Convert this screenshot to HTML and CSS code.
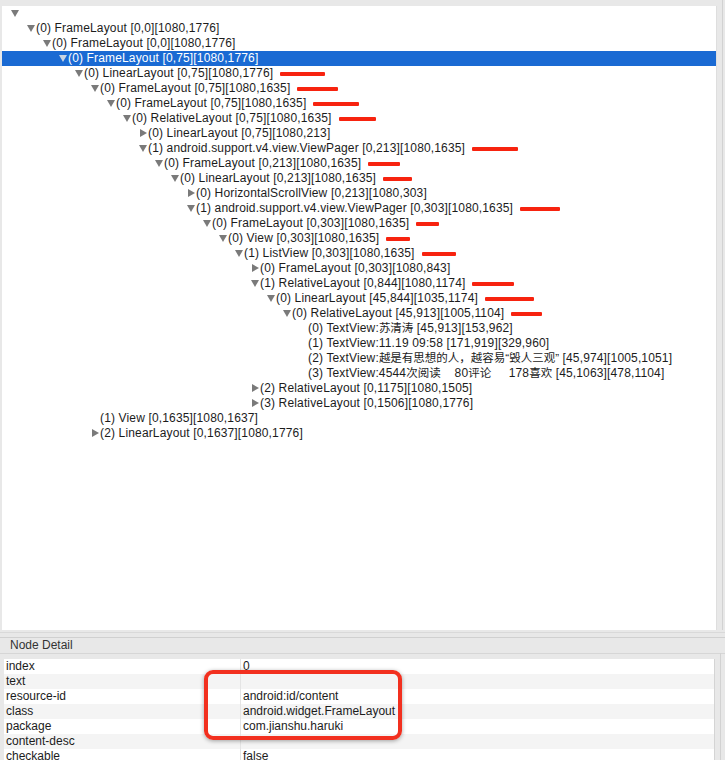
FILE: index.html
```html
<!DOCTYPE html>
<html lang="en">
<head>
    <meta charset="UTF-8">
    <title>UI Automator Viewer</title>
    <link rel="stylesheet" href="styles.css">
</head>
<body>
    <div class="tree-wrap">
        <div class="tree">
            <div class="row" style="--d:0"><span class="tg open"></span></div>
            <div class="row" style="--d:1"><span class="tg open"></span>(0) FrameLayout [0,0][1080,1776]</div>
            <div class="row" style="--d:2"><span class="tg open"></span>(0) FrameLayout [0,0][1080,1776]</div>
            <div class="row selected" style="--d:3"><span class="tg open"></span>(0) FrameLayout [0,75][1080,1776]</div>
            <div class="row" style="--d:4"><span class="tg open"></span>(0) LinearLayout [0,75][1080,1776]<span class="redact" style="width:45px"></span></div>
            <div class="row" style="--d:5"><span class="tg open"></span>(0) FrameLayout [0,75][1080,1635]<span class="redact" style="width:41px"></span></div>
            <div class="row" style="--d:6"><span class="tg open"></span>(0) FrameLayout [0,75][1080,1635]<span class="redact" style="width:46px"></span></div>
            <div class="row" style="--d:7"><span class="tg open"></span>(0) RelativeLayout [0,75][1080,1635]<span class="redact" style="width:37px"></span></div>
            <div class="row" style="--d:8"><span class="tg shut"></span>(0) LinearLayout [0,75][1080,213]</div>
            <div class="row" style="--d:8"><span class="tg open"></span>(1) android.support.v4.view.ViewPager [0,213][1080,1635]<span class="redact" style="width:46px"></span></div>
            <div class="row" style="--d:9"><span class="tg open"></span>(0) FrameLayout [0,213][1080,1635]<span class="redact" style="width:32px"></span></div>
            <div class="row" style="--d:10"><span class="tg open"></span>(0) LinearLayout [0,213][1080,1635]<span class="redact" style="width:29px"></span></div>
            <div class="row" style="--d:11"><span class="tg shut"></span>(0) HorizontalScrollView [0,213][1080,303]</div>
            <div class="row" style="--d:11"><span class="tg open"></span>(1) android.support.v4.view.ViewPager [0,303][1080,1635]<span class="redact" style="width:40px"></span></div>
            <div class="row" style="--d:12"><span class="tg open"></span>(0) FrameLayout [0,303][1080,1635]<span class="redact" style="width:23px"></span></div>
            <div class="row" style="--d:13"><span class="tg open"></span>(0) View [0,303][1080,1635]<span class="redact" style="width:24px"></span></div>
            <div class="row" style="--d:14"><span class="tg open"></span>(1) ListView [0,303][1080,1635]<span class="redact" style="width:34px"></span></div>
            <div class="row" style="--d:15"><span class="tg shut"></span>(0) FrameLayout [0,303][1080,843]</div>
            <div class="row" style="--d:15"><span class="tg open"></span>(1) RelativeLayout [0,844][1080,1174]<span class="redact" style="width:42px"></span></div>
            <div class="row" style="--d:16"><span class="tg open"></span>(0) LinearLayout [45,844][1035,1174]<span class="redact" style="width:49px"></span></div>
            <div class="row" style="--d:17"><span class="tg open"></span>(0) RelativeLayout [45,913][1005,1104]<span class="redact" style="width:31px"></span></div>
            <div class="row" style="--d:18"><span class="tg"></span>(0) TextView:<span class="cjk">苏清涛</span> [45,913][153,962]</div>
            <div class="row" style="--d:18"><span class="tg"></span>(1) TextView:11.19 09:58 [171,919][329,960]</div>
            <div class="row" style="--d:18"><span class="tg"></span>(2) TextView:<span class="cjk">越是有思想的人，越容易“毁人三观”</span> [45,974][1005,1051]</div>
            <div class="row" style="--d:18"><span class="tg"></span>(3) TextView:4544<span class="cjk">次阅读</span>    80<span class="cjk">评论</span>     178<span class="cjk">喜欢</span> [45,1063][478,1104]</div>
            <div class="row" style="--d:15"><span class="tg shut"></span>(2) RelativeLayout [0,1175][1080,1505]</div>
            <div class="row" style="--d:15"><span class="tg shut"></span>(3) RelativeLayout [0,1506][1080,1776]</div>
            <div class="row" style="--d:5"><span class="tg"></span>(1) View [0,1635][1080,1637]</div>
            <div class="row" style="--d:5"><span class="tg shut"></span>(2) LinearLayout [0,1637][1080,1776]</div>
        </div>
        <div class="vscroll"></div>
    </div>

    <div class="splitter"></div>

    <div class="detail">
        <div class="detail-title">Node Detail</div>
        <div class="table-wrap">
            <table class="props">
                <tr><td>index</td><td>0</td></tr>
                <tr><td>text</td><td></td></tr>
                <tr><td>resource-id</td><td>android:id/content</td></tr>
                <tr><td>class</td><td>android.widget.FrameLayout</td></tr>
                <tr><td>package</td><td>com.jianshu.haruki</td></tr>
                <tr><td>content-desc</td><td></td></tr>
                <tr><td>checkable</td><td>false</td></tr>
            </table>
            <div class="vscroll small"></div>
        </div>
        <div class="highlight"></div>
    </div>
</body>
</html>
```

FILE: styles.css
```css
html, body {
    margin: 0;
    padding: 0;
    height: 760px;
    overflow: hidden;
    background: #e8e8e8;
    font-family: "Liberation Sans", Arial, "Noto Sans CJK SC", sans-serif;
    font-size: 12px;
    color: #1c1c1c;
}

.tree-wrap {
    display: flex;
    padding-top: 6px;
    height: 624px;
}

.tree {
    flex: 1;
    margin-left: 2px;
    background: #fff;
    overflow: hidden;
}

.vscroll {
    width: 8px;
    background: #e8e8e8;
    border-left: 1px solid #dedede;
    position: relative;
}

.vscroll::after {
    content: "";
    position: absolute;
    top: -6px;
    bottom: 0;
    left: 5px;
    width: 1px;
    background: #d2d2d2;
}

.vscroll.small {
    width: 10px;
    border-left-color: #d4d4d4;
}

.row {
    height: 15px;
    line-height: 15px;
    white-space: pre;
    letter-spacing: 0.15px;
    padding-left: calc(9px + var(--d) * 16px);
    display: flex;
    align-items: center;
}

.cjk {
    font-size: 11.5px;
    letter-spacing: 0;
}

.row.selected {
    background: #1a6ad3;
    color: #fff;
}

.tg {
    width: 9px;
    height: 15px;
    flex-shrink: 0;
    position: relative;
}

.tg.open::before {
    content: "";
    position: absolute;
    left: 0;
    top: 4px;
    border-left: 4px solid transparent;
    border-right: 4px solid transparent;
    border-top: 7px solid #7a7a7a;
}

.tg.shut::before {
    content: "";
    position: absolute;
    left: 1px;
    top: 3px;
    border-top: 4px solid transparent;
    border-bottom: 4px solid transparent;
    border-left: 7px solid #7a7a7a;
}

.selected .tg.open::before {
    border-top-color: #c9d4e2;
}

.redact {
    display: inline-block;
    height: 4px;
    margin-left: 7px;
    background: #f7230f;
    border-radius: 1px;
}

.splitter {
    height: 4px;
    border-top: 1px solid #d9d9d9;
    border-bottom: 1px solid #d0d0d0;
    margin-top: 2px;
}

.detail {
    position: relative;
}

.detail-title {
    height: 15px;
    line-height: 15px;
    padding-left: 10px;
    color: #333;
}

.table-wrap {
    display: flex;
    border-top: 1px solid #d6d6d6;
    padding: 5px 0 0 4px;
}

.props {
    flex: 1;
    border-collapse: collapse;
    background: #fff;
}

.props td {
    height: 15px;
    line-height: 15px;
    padding: 0 0 0 2px;
    white-space: nowrap;
}

.props td:first-child {
    width: 234px;
    border-right: 1px solid #e4e4e4;
}

.props tr:nth-child(even) td {
    background: #f4f4f4;
}

.highlight {
    position: absolute;
    left: 204px;
    top: 32px;
    width: 190px;
    height: 62px;
    border: 4px solid #f2301f;
    border-radius: 9px;
    box-shadow: 0 1px 4px rgba(0, 0, 0, 0.35);
}
```
